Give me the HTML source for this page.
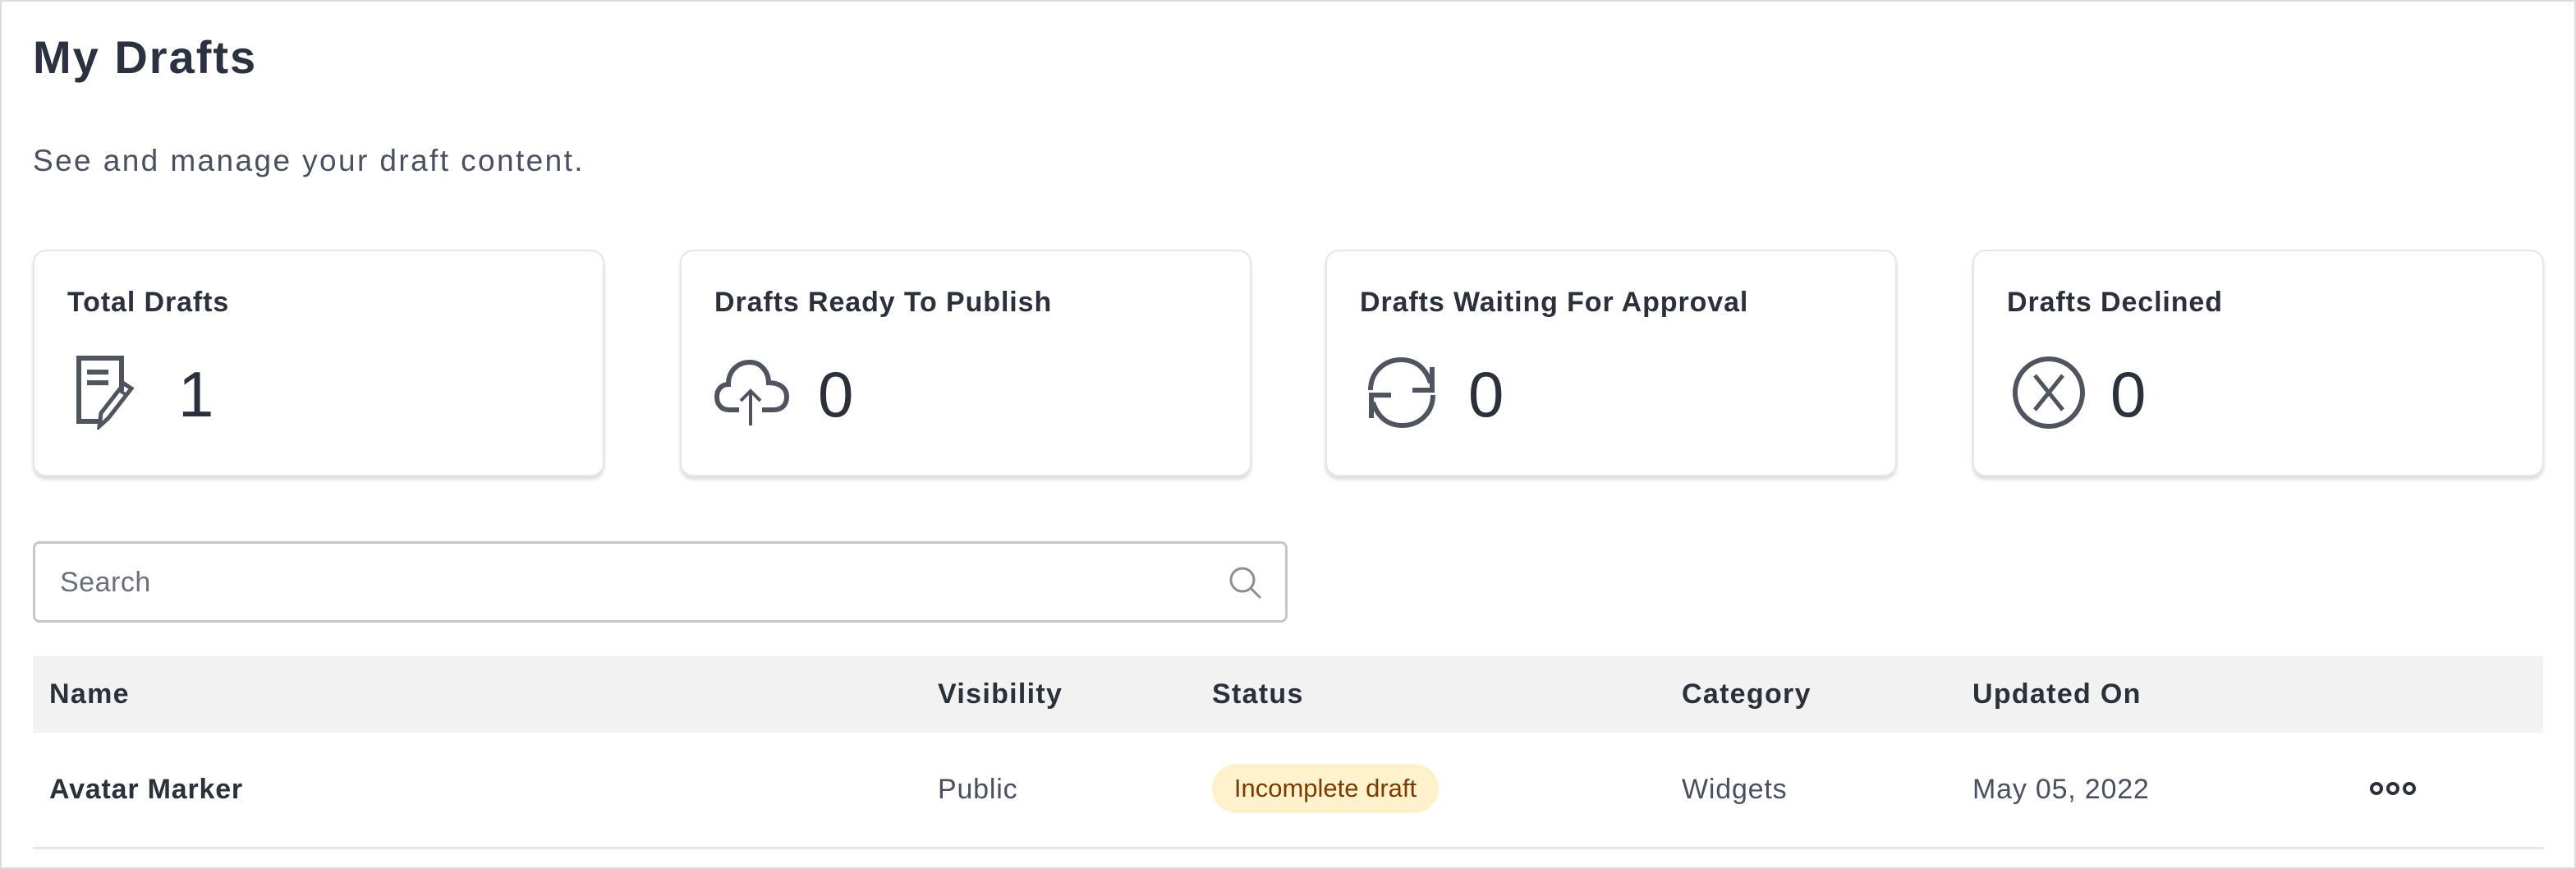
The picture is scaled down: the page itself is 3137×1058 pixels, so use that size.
<!DOCTYPE html>
<html><head><meta charset="utf-8"><style>
*{box-sizing:border-box;margin:0;padding:0}
body{width:3137px;height:1058px;background:#fff;font-family:"Liberation Sans",sans-serif;color:#2b303b;position:relative;overflow:hidden}
.frame{position:absolute;left:0;top:0;width:3137px;height:1058px;border:2px solid #dcdcdc}
.abs{position:absolute;white-space:nowrap}
h1{position:absolute;left:40px;top:36px;font-size:56px;font-weight:bold;color:#2b3140;line-height:68px;letter-spacing:2px}
.sub{left:40px;top:174px;font-size:37px;color:#4b5060;line-height:44px;letter-spacing:2.4px}
.card{position:absolute;top:304px;width:696px;height:276px;border:2px solid #e6e6e8;border-radius:16px;box-shadow:0 4px 4px rgba(0,0,0,.14);background:#fff}
.card .t{position:absolute;left:40px;top:42px;font-size:34px;font-weight:bold;color:#2b303b;line-height:40px;letter-spacing:0.9px}
.card .n{position:absolute;top:126px;font-size:78px;color:#2b303b;line-height:96px}
.card svg{position:absolute}
.search{position:absolute;left:40px;top:659px;width:1528px;height:99px;border:3px solid #c6c6cc;border-radius:8px}
.search span{position:absolute;left:30px;top:28px;font-size:34px;color:#6b6f78;letter-spacing:0.5px}
.thead{position:absolute;left:40px;top:799px;width:3057px;height:93px;background:#f2f2f2}
.th{font-size:34px;font-weight:bold;top:826px;color:#2b303b;letter-spacing:1.3px}
.td{font-size:34px;top:942px;color:#4b5060;letter-spacing:0.8px}
.line{position:absolute;left:40px;top:1031px;width:3057px;height:3px;background:#e6e6e6}
.badge{position:absolute;left:1476px;top:930px;width:276px;height:60px;border-radius:30px;background:#fff1cc;color:#7a3d00;font-size:31px;line-height:60px;text-align:center}
</style></head><body>
<div class="frame"></div>
<h1>My Drafts</h1>
<div class="abs sub">See and manage your draft content.</div>

<div class="card" style="left:40px">
<div class="t">Total Drafts</div>
<svg style="left:51px;top:127px" width="80" height="90" viewBox="0 0 80 90" fill="none" stroke="#4f545f" stroke-width="6">
<path d="M30 80H3V3h52v40"/><path d="M13 20h26M13 33h26" stroke-width="6"/>
<path d="M28 86l2-16 28-36 9 6-28 36z" stroke-width="5"/><path d="M52 42l9 6" stroke-width="4"/></svg>
<div class="n" style="left:175px">1</div></div>

<div class="card" style="left:828px">
<div class="t">Drafts Ready To Publish</div>
<svg style="left:40px;top:132px" width="92" height="82" viewBox="0 0 92 82" fill="none" stroke="#4f545f" stroke-width="6">
<path d="M30 61H18C8 61 3 54 3 45c0-9 6-15 14-15C17 12 30 3 43 3c14 0 23 12 23 25 10 0 22 4 22 17 0 10-6 16-16 16H58"/>
<path d="M44 80V38M32 50l12-12 12 12" stroke-width="4"/></svg>
<div class="n" style="left:166px">0</div></div>

<div class="card" style="left:1614px">
<div class="t">Drafts Waiting For Approval</div>
<svg style="left:48px;top:129px" width="88" height="86" viewBox="0 0 88 86" fill="none" stroke="#4f545f" stroke-width="6">
<path d="M5 40C5 18 22 3 42 3c18 0 30 10 36 28"/><path d="M80 12v28H56" />
<path d="M81 46c0 22-17 37-37 37C26 83 14 73 8 55"/><path d="M6 74V46h24"/></svg>
<div class="n" style="left:172px">0</div></div>

<div class="card" style="left:2402px">
<div class="t">Drafts Declined</div>
<svg style="left:46px;top:127px" width="90" height="90" viewBox="0 0 90 90" fill="none" stroke="#4f545f" stroke-width="6">
<circle cx="45" cy="45" r="41"/><path d="M28 24l34 42M62 24L28 66" stroke-width="5"/></svg>
<div class="n" style="left:166px">0</div></div>

<div class="search"><span>Search</span>
<svg style="position:absolute;left:1452px;top:26px" width="44" height="44" viewBox="0 0 44 44" fill="none" stroke="#8a8e96" stroke-width="3"><circle cx="18" cy="18" r="14"/><path d="M28 28l12 12"/></svg></div>

<div class="thead"></div>
<div class="abs th" style="left:60px">Name</div>
<div class="abs th" style="left:1142px">Visibility</div>
<div class="abs th" style="left:1476px">Status</div>
<div class="abs th" style="left:2048px">Category</div>
<div class="abs th" style="left:2402px">Updated On</div>

<div class="abs td" style="left:60px;font-weight:bold;color:#2b303b">Avatar Marker</div>
<div class="abs td" style="left:1142px">Public</div>
<div class="badge">Incomplete draft</div>
<div class="abs td" style="left:2048px">Widgets</div>
<div class="abs td" style="left:2402px">May 05, 2022</div>
<svg style="position:absolute;left:2886px;top:951px" width="56" height="18" viewBox="0 0 56 18" fill="none" stroke="#2b303b" stroke-width="4"><circle cx="8" cy="9" r="6"/><circle cx="28" cy="9" r="6"/><circle cx="48" cy="9" r="6"/></svg>
<div class="line"></div>
</body></html>
